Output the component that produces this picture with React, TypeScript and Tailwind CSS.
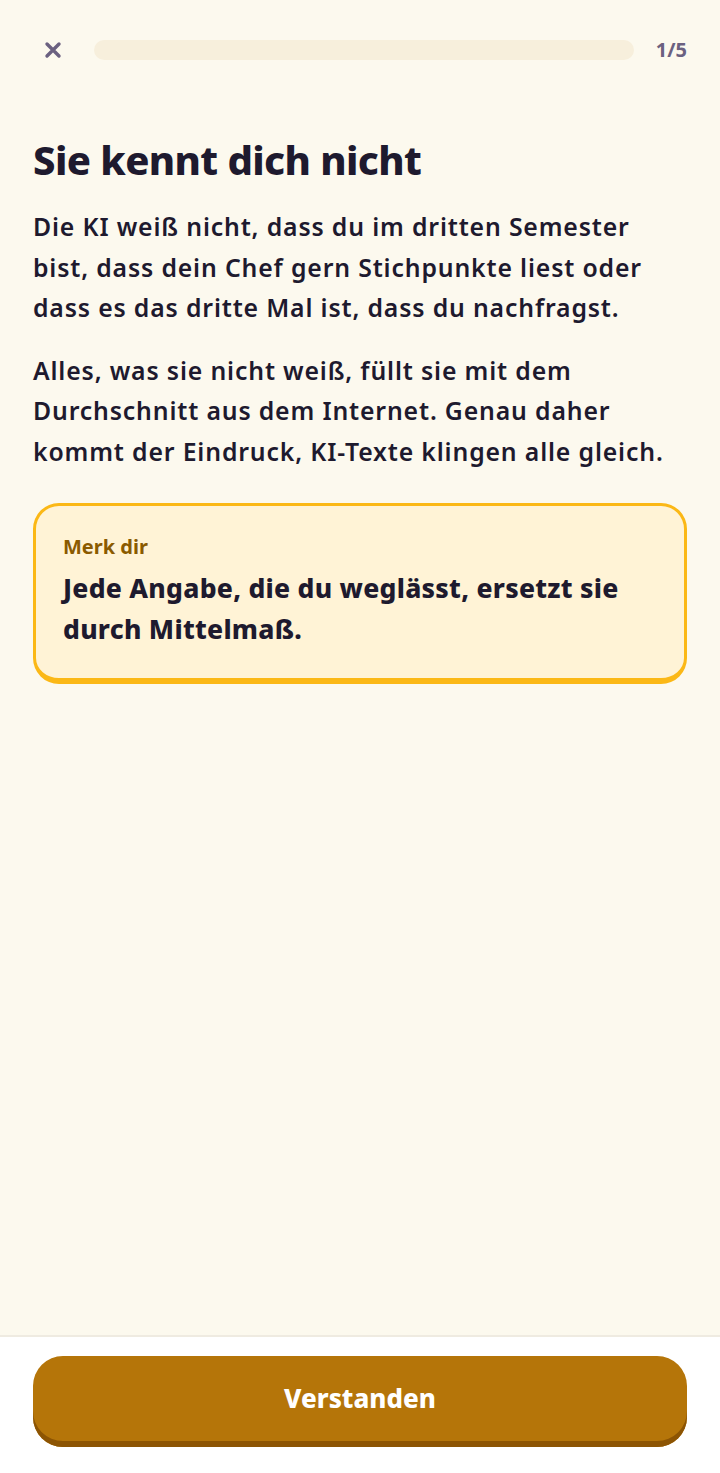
import React from "react";

const font = { fontFamily: '"Noto Sans", "Open Sans", sans-serif' };

function CloseIcon() {
  return (
    <svg width="18" height="18" viewBox="0 0 18 18" fill="none">
      <path d="M3 3L15 15M15 3L3 15" stroke="#6b6180" strokeWidth="3.4" strokeLinecap="round" />
    </svg>
  );
}

export default function App() {
  return (
    <div className="flex h-[1473px] w-full flex-col bg-[#fcf9ee] text-[#1e1a2e]" style={font}>
      <main className="flex-1 px-[33px]">
        <div className="flex h-[102px] items-center gap-[32px] pb-[2px]">
          <button className="ml-[11px] flex h-[18px] w-[18px] items-center justify-center">
            <CloseIcon />
          </button>
          <div className="h-[20px] flex-1 rounded-full bg-[#f7efdc]" />
          <span className="ml-[-10px] text-[20px] font-bold text-[#6b6180]">1/5</span>
        </div>

        <h1 className="mt-[33px] text-[40px] font-extrabold leading-[50px] tracking-[-0.015em]">
          Sie kennt dich nicht
        </h1>

        <p className="mt-[21px] text-[24.8px] font-semibold leading-[40.5px] tracking-[0.034em]">
          Die KI weiß nicht, dass du im dritten Semester
          <br />
          bist, dass dein Chef gern Stichpunkte liest oder
          <br />
          dass es das dritte Mal ist, dass du nachfragst.
        </p>
        <p className="mt-[22px] text-[24.8px] font-semibold leading-[40.5px] tracking-[0.034em]">
          Alles, was sie nicht weiß, füllt sie mit dem
          <br />
          Durchschnitt aus dem Internet. Genau daher
          <br />
          kommt der Eindruck, KI-Texte klingen alle gleich.
        </p>

        <div className="mt-[32px] rounded-[26px] border-[3px] border-b-[6px] border-[#fbb816] bg-[#fff3d6] px-[27px] pb-[28px] pt-[28px]">
          <p className="text-[20px] font-bold leading-[26px] text-[#8a5a00]">Merk dir</p>
          <p className="mt-[8px] text-[26.5px] font-extrabold leading-[41px] tracking-[0.01em]">
            Jede Angabe, die du weglässt, ersetzt sie
            <br />
            durch Mittelmaß.
          </p>
        </div>
      </main>

      <footer className="h-[138px] border-t-2 border-[#efebe1] bg-white px-[33px] pt-[19px]">
        <button className="flex h-[91px] w-full items-center justify-center rounded-[30px] bg-[#b57509] pb-[6px] text-[26px] font-extrabold text-white shadow-[inset_0_-6px_0_#8c5403]">
          Verstanden
        </button>
      </footer>
    </div>
  );
}
